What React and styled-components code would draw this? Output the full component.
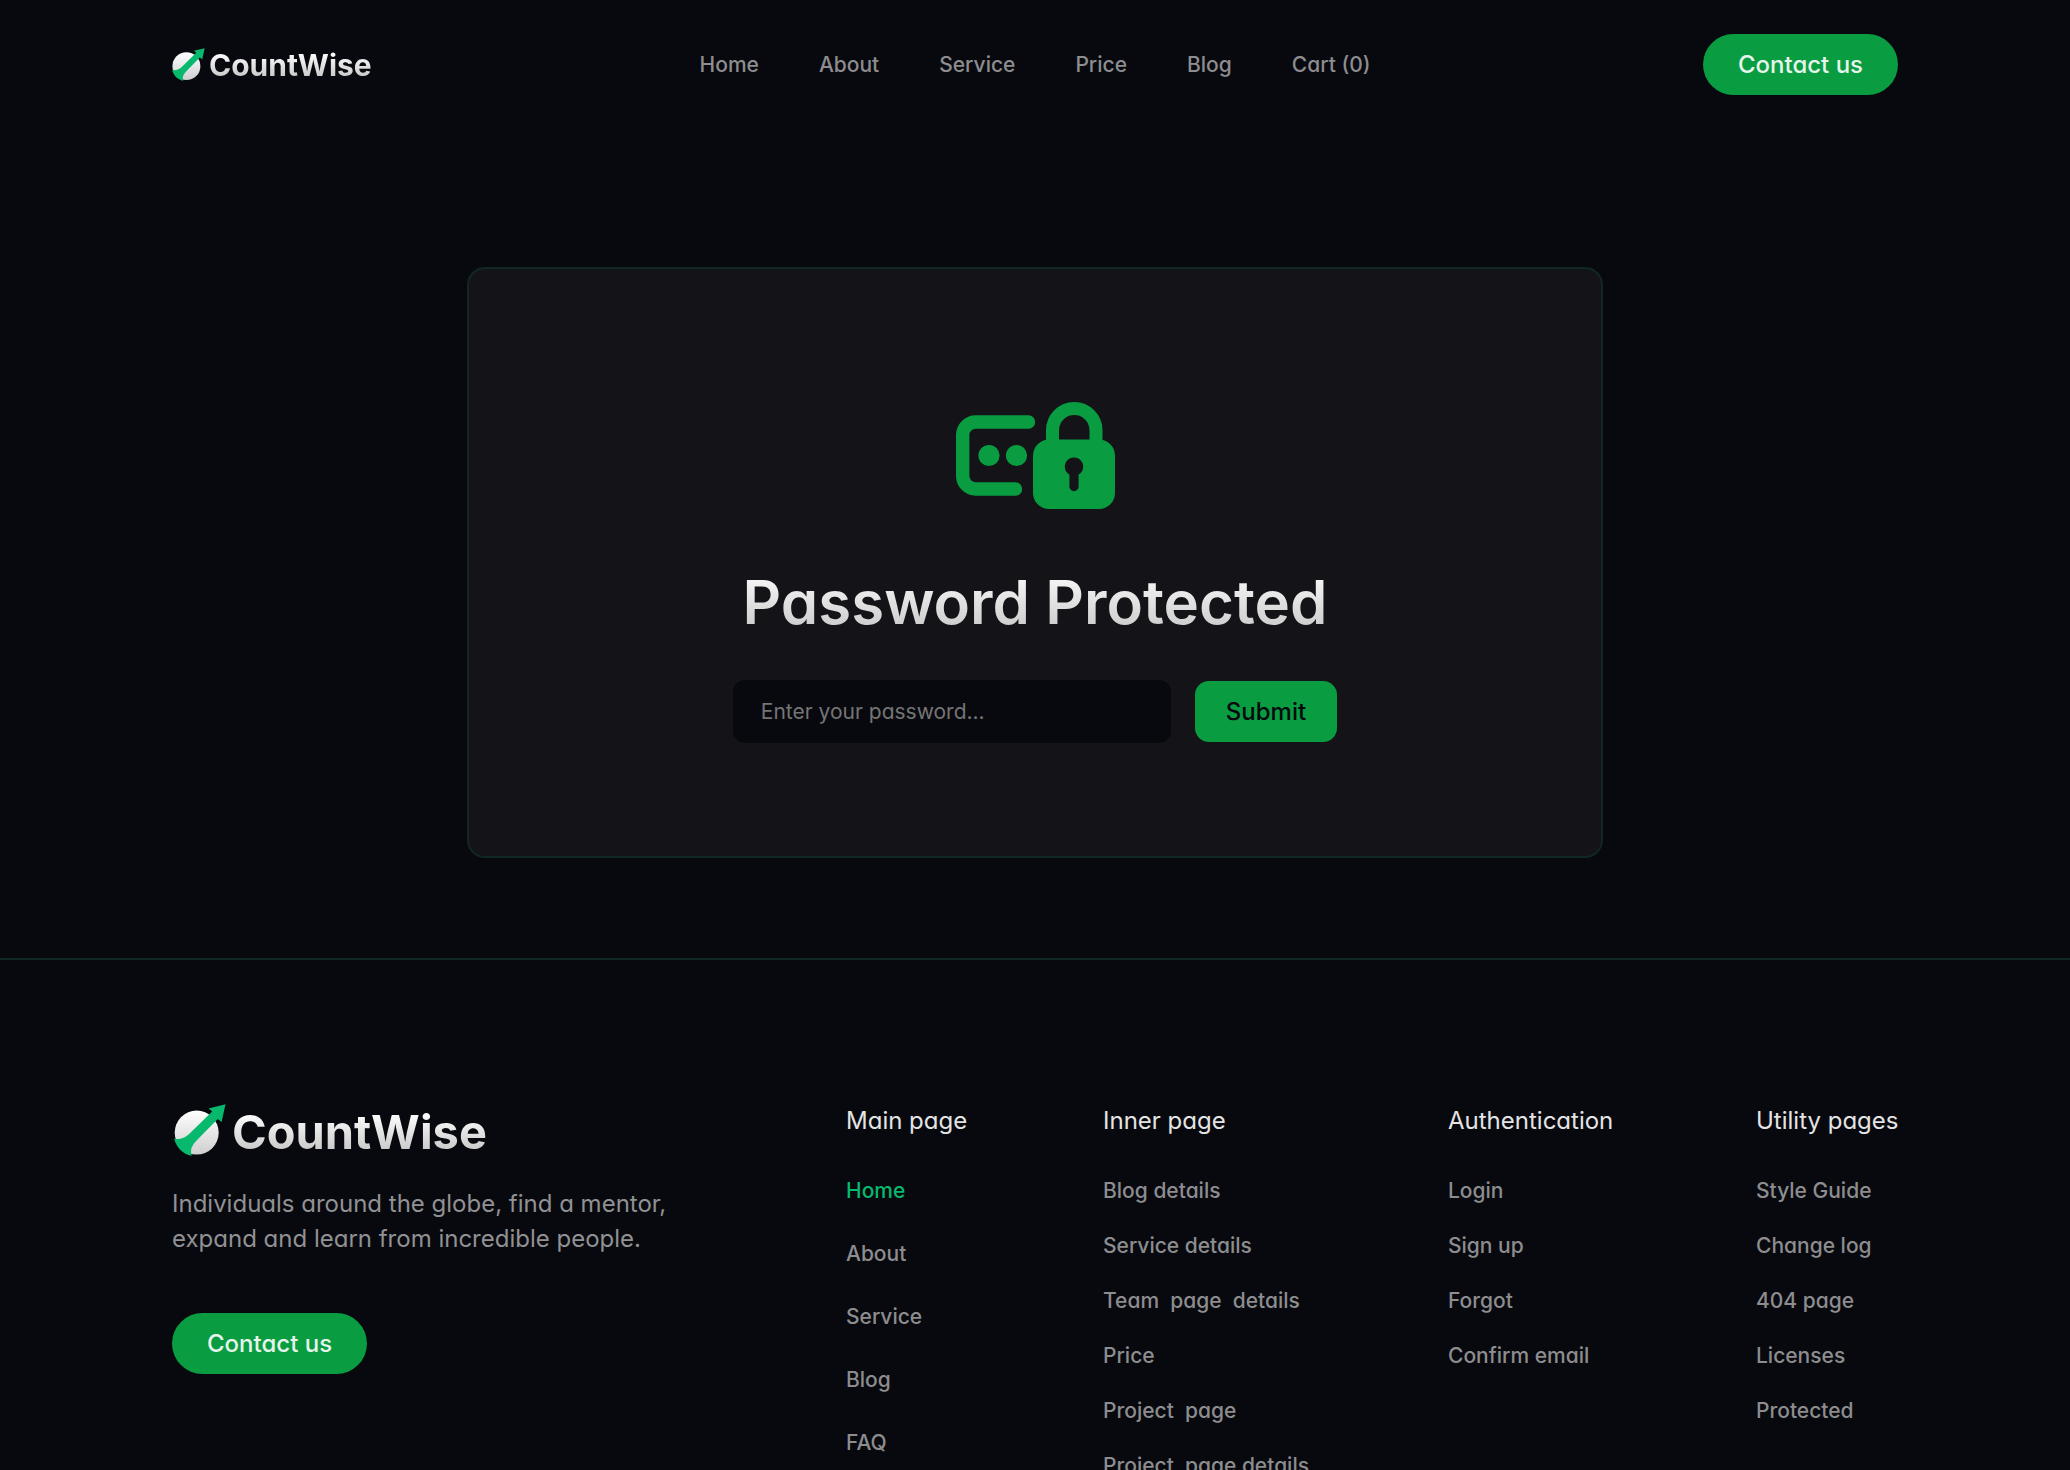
import React, { useState } from "react";
import styled, { createGlobalStyle } from "styled-components";

const NAV_LINKS = ["Home", "About", "Service", "Price", "Blog", "Cart (0)"];

const FOOTER_COLUMNS = [
  {
    title: "Main page",
    roomy: true,
    links: ["Home", "About", "Service", "Blog", "FAQ"],
  },
  {
    title: "Inner page",
    links: [
      "Blog details",
      "Service details",
      "Team  page  details",
      "Price",
      "Project  page",
      "Project  page details",
    ],
  },
  {
    title: "Authentication",
    links: ["Login", "Sign up", "Forgot", "Confirm email"],
  },
  {
    title: "Utility pages",
    links: ["Style Guide", "Change log", "404 page", "Licenses", "Protected"],
  },
];

const LogoMark = ({ id, size }) => (
  <svg width={size} height={size} viewBox="0 0 52 52" aria-hidden="true">
    <defs>
      <linearGradient id={id} x1="0" y1="0" x2="0" y2="1">
        <stop offset="0" stopColor="#ffffff" />
        <stop offset="1" stopColor="#cfcfcf" />
      </linearGradient>
    </defs>
    <circle cx="22.7" cy="28.6" r="22" fill={`url(#${id})`} />
    <path
      d="M51.5 0.3L34.6 4.4L38.2 7.4L19 26.3C13 32.5 8 36.5 0.2 34.4C2 43 8.5 50 17.8 51.8C15.5 44.5 18.5 40.5 26 33L43.8 15L47.6 18Z"
      fill="#06b96c"
    />
  </svg>
);

const LockIcon = () => (
  <svg width="159" height="107" viewBox="0 0 159 107" aria-hidden="true">
    <path
      d="M72.5 20H20A13 13 0 0 0 6.7 33V74A13 13 0 0 0 20 87H59.5"
      fill="none"
      stroke="currentColor"
      strokeWidth="13.4"
      strokeLinecap="round"
    />
    <circle cx="33" cy="53.5" r="10.6" fill="currentColor" />
    <circle cx="60.5" cy="53.5" r="10.6" fill="currentColor" />
    <path
      d="M96.5 42V28.3A21.75 21.75 0 0 1 140 28.3V42"
      fill="none"
      stroke="currentColor"
      strokeWidth="13"
    />
    <path
      fillRule="evenodd"
      fill="currentColor"
      d="M93 37.5H143A16 16 0 0 1 159 53.5V91A16 16 0 0 1 143 107H93A16 16 0 0 1 77 91V53.5A16 16 0 0 1 93 37.5ZM113.4 72.6V84.6A4.6 4.6 0 0 0 122.6 84.6V72.6A9.2 9.2 0 1 0 113.4 72.6Z"
    />
  </svg>
);

const App = () => {
  const [password, setPassword] = useState("");

  return (
    <>
      <GlobalStyle />
      <Page>
        <Header>
          <Brand href="#">
            <LogoMark id="mark-header" size={33} />
            <BrandName>CountWise</BrandName>
          </Brand>
          <Nav>
            {NAV_LINKS.map((label) => (
              <NavLink key={label} href="#">
                {label}
              </NavLink>
            ))}
          </Nav>
          <PillLink href="#">Contact us</PillLink>
        </Header>

        <Main>
          <Card onSubmit={(e) => e.preventDefault()}>
            <LockIcon />
            <Title>Password Protected</Title>
            <Fields>
              <Input
                type="password"
                aria-label="Password"
                placeholder="Enter your password..."
                value={password}
                onChange={(e) => setPassword(e.target.value)}
              />
              <SubmitButton type="submit">Submit</SubmitButton>
            </Fields>
          </Card>
        </Main>

        <Footer>
          <About>
            <Brand href="#" $large>
              <LogoMark id="mark-footer" size={52} />
              <BrandName $large>CountWise</BrandName>
            </Brand>
            <Blurb>
              Individuals around the globe, find a mentor,
              <br />
              expand and learn from incredible people.
            </Blurb>
            <PillLink href="#">Contact us</PillLink>
          </About>
          {FOOTER_COLUMNS.map(({ title, links, roomy }) => (
            <section key={title}>
              <ColumnTitle>{title}</ColumnTitle>
              <LinkList $roomy={roomy}>
                {links.map((label) => (
                  <li key={label}>
                    <FooterLink href="#" $active={label === "Home"}>
                      {label}
                    </FooterLink>
                  </li>
                ))}
              </LinkList>
            </section>
          ))}
        </Footer>
      </Page>
    </>
  );
};

const GlobalStyle = createGlobalStyle`
  *, *::before, *::after {
    box-sizing: border-box;
  }
  body {
    margin: 0;
    background: #08090e;
    color: #ffffff;
    font-family: Inter, "Open Sans", sans-serif;
    font-feature-settings: "cv11";
  }
  a {
    color: inherit;
    text-decoration: none;
  }
  svg {
    display: block;
    flex-shrink: 0;
  }
`;

const Page = styled.div`
  height: 100vh;
  overflow: hidden;
`;

const Header = styled.header`
  display: grid;
  grid-template-columns: 1fr auto 1fr;
  align-items: center;
  padding: 34px 172px;

  > :last-child {
    justify-self: end;
  }
`;

const Brand = styled.a`
  display: flex;
  align-items: ${({ $large }) => ($large ? "flex-start" : "center")};
  gap: ${({ $large }) => ($large ? "6px" : "4px")};
  padding-left: ${({ $large }) => ($large ? "2px" : "0px")};
`;

const BrandName = styled.span`
  font-size: ${({ $large }) => ($large ? "47px" : "30px")};
  line-height: ${({ $large }) => ($large ? "56px" : "36px")};
  font-weight: 700;
  color: transparent;
  background: linear-gradient(#ffffff 15%, #c4c4c4 90%);
  background-clip: text;
`;

const Nav = styled.nav`
  display: flex;
  gap: 60px;
`;

const NavLink = styled.a`
  font-size: 21px;
  line-height: 30px;
  font-weight: 500;
  color: #8d8d90;
  :hover {
    color: #06b96c;
  }
`;

const PillLink = styled.a`
  display: inline-flex;
  align-items: center;
  justify-content: center;
  height: 61px;
  padding: 0 35px;
  border-radius: 31px;
  background: #099c41;
  font-size: 24px;
  font-weight: 500;
  color: #e6f5ec;
`;

const Main = styled.main`
  padding: 138px 24px 100px;
`;

const Card = styled.form`
  display: flex;
  flex-direction: column;
  align-items: center;
  max-width: 1136px;
  margin: 0 auto;
  padding: 133px 24px 113px;
  border: 2px solid #102724;
  border-radius: 18px;
  background: #141318;
  color: #099c41;
`;

const Title = styled.h1`
  margin: 56px 0 41px;
  font-size: 60px;
  line-height: 74px;
  font-weight: 600;
  color: transparent;
  background: linear-gradient(#ffffff, #c4c4c4);
  background-clip: text;
`;

const Fields = styled.div`
  display: flex;
  align-items: center;
  gap: 24px;
`;

const Input = styled.input`
  width: 438px;
  height: 63px;
  padding: 0 28px;
  border: none;
  border-radius: 12px;
  outline: none;
  background: #08090e;
  color: #ffffff;
  font: inherit;
  font-size: 21px;
  ::placeholder {
    color: #5d5d61;
  }
`;

const SubmitButton = styled.button`
  height: 61px;
  padding: 0 31px;
  border: none;
  border-radius: 14px;
  background: #099c41;
  color: #08090e;
  font: inherit;
  font-size: 24px;
  font-weight: 500;
  :hover {
    cursor: pointer;
  }
`;

const Footer = styled.footer`
  display: grid;
  grid-template-columns: 1fr 257px 345px 308px 142px;
  padding: 144px 172px;
  border-top: 2px solid #102724;
`;

const About = styled.div`
  display: flex;
  flex-direction: column;
  align-items: flex-start;
`;

const Blurb = styled.p`
  margin: 26px 0 57px;
  font-size: 24px;
  line-height: 35px;
  color: #919194;
`;

const ColumnTitle = styled.h2`
  margin: 0 0 38px;
  font-size: 24px;
  line-height: 34px;
  font-weight: 400;
  color: #e4e4e4;
  white-space: nowrap;
`;

const LinkList = styled.ul`
  display: grid;
  gap: ${({ $roomy }) => ($roomy ? "33px" : "25px")};
  margin: 0;
  padding: 0;
  list-style: none;
`;

const FooterLink = styled.a`
  display: block;
  font-size: 21px;
  line-height: 30px;
  font-weight: 500;
  color: ${({ $active }) => ($active ? "#06b96c" : "#8d8d90")};
  white-space: pre;
`;

export default App;
